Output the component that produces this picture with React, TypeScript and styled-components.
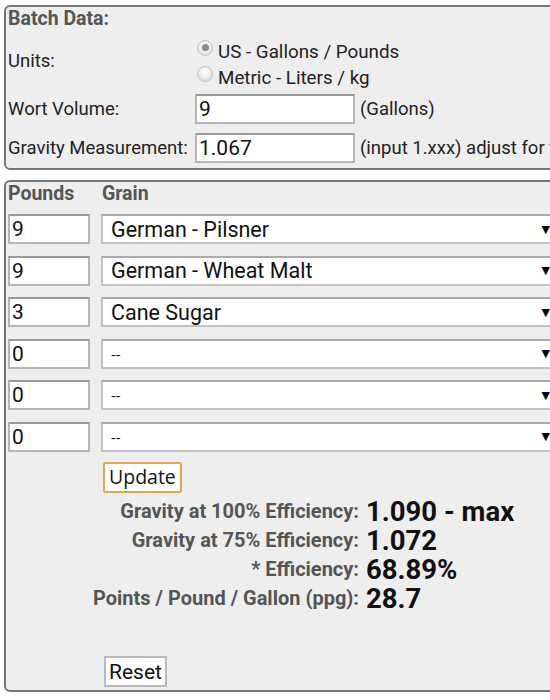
import React from "react";
import styled, { createGlobalStyle } from "styled-components";

const GlobalStyle = createGlobalStyle`
  html, body {
    margin: 0;
    padding: 0;
    overflow: hidden;
    background: #ffffff;
    font-family: Roboto, "Liberation Sans", sans-serif;
    color: #222;
  }
`;

const Page = styled.div`
  width: 640px;
  padding: 5px 0 0 4px;
  display: flex;
  flex-direction: column;
  gap: 10px;
`;

const Panel = styled.div<{ $height: number }>`
  height: ${(p) => p.$height}px;
  box-sizing: border-box;
  background: #eeeeee;
  border: 2px solid #777777;
  border-radius: 6px;
  padding: 0 0 0 2px;
  display: flex;
  flex-direction: column;
`;

const Heading = styled.div`
  font-size: 19.5px;
  font-weight: 700;
  color: #555555;
  line-height: 24px;
`;

const FormGrid = styled.div`
  display: grid;
  grid-template-columns: 187px 1fr;
  row-gap: 9px;
  align-items: center;
  margin-top: 5px;
`;

const Label = styled.div`
  font-size: 18.5px;
  color: #222;
`;

const RadioGroup = styled.div`
  display: flex;
  flex-direction: column;
  gap: 6px;
  padding: 6px 0 0 2px;
  margin-bottom: -3px;
`;

const RadioRow = styled.div`
  display: flex;
  align-items: center;
  gap: 5px;
  font-size: 18.8px;
  line-height: 20px;
`;

const Radio = styled.span<{ $checked?: boolean }>`
  width: 16px;
  height: 16px;
  border-radius: 50%;
  box-sizing: border-box;
  border: 1px solid #c4c4c4;
  background: radial-gradient(circle at 50% 35%, #ffffff, #d8d8d8);
  display: flex;
  align-items: center;
  justify-content: center;
  margin-top: -9px;

  &::after {
    content: "";
    display: ${(p) => (p.$checked ? "block" : "none")};
    width: 7px;
    height: 7px;
    border-radius: 50%;
    background: #8a8a8a;
  }
`;

const InputLine = styled.div`
  display: flex;
  align-items: center;
  gap: 5px;
  font-size: 18.5px;
  white-space: nowrap;
`;

const TextBox = styled.div<{ $width: number }>`
  width: ${(p) => p.$width}px;
  height: 30px;
  box-sizing: border-box;
  background: #ffffff;
  border: 2px solid #b5b5b5;
  border-top-color: #999999;
  padding: 0 2px;
  font-size: 21px;
  line-height: 26px;
  color: #111;
`;

const GrainHeader = styled.div`
  display: flex;
  font-size: 19.5px;
  font-weight: 700;
  color: #555555;
  line-height: 24px;
`;

const HeaderCell = styled.div<{ $width?: number }>`
  width: ${(p) => (p.$width ? `${p.$width}px` : "auto")};
`;

const GrainList = styled.div`
  display: flex;
  flex-direction: column;
  gap: 11.5px;
  margin-top: 8px;
`;

const GrainRow = styled.div`
  display: flex;
  gap: 11px;
`;

const Select = styled.div<{ $empty?: boolean }>`
  width: 455px;
  height: 30px;
  box-sizing: border-box;
  background: #ffffff;
  border: 2px solid #c4c4c4;
  border-top-color: #aaaaaa;
  padding: 0 4px 0 8px;
  display: flex;
  align-items: center;
  justify-content: space-between;
  font-family: ${(p) => (p.$empty ? '"Open Sans", sans-serif' : "Roboto, sans-serif")};
  font-size: ${(p) => (p.$empty ? "15px" : "21.5px")};
  color: #111;
`;

const Arrow = styled.span`
  font-size: 11px;
  color: #000;
  font-family: "DejaVu Sans", sans-serif;
`;

const Button = styled.button<{ $focused?: boolean }>`
  align-self: flex-start;
  margin-left: ${(p) => (p.$focused ? "95px" : "96px")};
  height: 31px;
  box-sizing: border-box;
  padding: 0 ${(p) => (p.$focused ? "4px" : "3px")};
  background: #ffffff;
  border: 2px solid ${(p) => (p.$focused ? "#e2a94c" : "#b8b8b8")};
  border-radius: ${(p) => (p.$focused ? "2px" : "0")};
  font-family: ${(p) => (p.$focused ? '"Open Sans", sans-serif' : "Roboto, sans-serif")};
  font-size: ${(p) => (p.$focused ? "19.5px" : "21px")};
  color: #111;
  line-height: 26px;
`;

const Results = styled.div`
  display: grid;
  grid-template-columns: 351px auto;
  grid-auto-rows: 29px;
  column-gap: 7px;
  align-items: center;
  margin-top: 4px;
`;

const ResultLabel = styled.div`
  text-align: right;
  font-size: 20px;
  line-height: 24px;
  font-weight: 700;
  color: #555555;
  white-space: nowrap;
`;

const ResultValue = styled.div`
  font-size: 27.5px;
  line-height: 29px;
  font-weight: 700;
  color: #111;
  white-space: nowrap;
`;

const Spacer = styled.div`
  flex: 1;
`;

const Gap = styled.div<{ $h: number }>`
  height: ${(p) => p.$h}px;
  flex: none;
`;

const grains = [
  { pounds: "9", name: "German - Pilsner" },
  { pounds: "9", name: "German - Wheat Malt" },
  { pounds: "3", name: "Cane Sugar" },
  { pounds: "0", name: "--" },
  { pounds: "0", name: "--" },
  { pounds: "0", name: "--" },
];

const results = [
  { label: "Gravity at 100% Efficiency:", value: "1.090 - max" },
  { label: "Gravity at 75% Efficiency:", value: "1.072" },
  { label: "* Efficiency:", value: "68.89%" },
  { label: "Points / Pound / Gallon (ppg):", value: "28.7" },
];

export default function App() {
  return (
    <>
      <GlobalStyle />
      <Page>
        <Panel $height={165}>
          <Heading>Batch Data:</Heading>
          <FormGrid>
            <Label>Units:</Label>
            <RadioGroup>
              <RadioRow>
                <Radio $checked />
                US - Gallons / Pounds
              </RadioRow>
              <RadioRow>
                <Radio />
                Metric - Liters / kg
              </RadioRow>
            </RadioGroup>
            <Label>Wort Volume:</Label>
            <InputLine>
              <TextBox $width={160}>9</TextBox>
              (Gallons)
            </InputLine>
            <Label>Gravity Measurement:</Label>
            <InputLine>
              <TextBox $width={160}>1.067</TextBox>
              (input 1.xxx) adjust for temperature
            </InputLine>
          </FormGrid>
        </Panel>
        <Panel $height={512}>
          <GrainHeader>
            <HeaderCell $width={94}>Pounds</HeaderCell>
            <HeaderCell>Grain</HeaderCell>
          </GrainHeader>
          <GrainList>
            {grains.map((g, i) => (
              <GrainRow key={i}>
                <TextBox $width={82}>{g.pounds}</TextBox>
                <Select $empty={g.name === "--"}>
                  <span>{g.name}</span>
                  <Arrow>▼</Arrow>
                </Select>
              </GrainRow>
            ))}
          </GrainList>
          <Gap $h={10} />
          <Button $focused>Update</Button>
          <Results>
            {results.map((r) => (
              <React.Fragment key={r.label}>
                <ResultLabel>{r.label}</ResultLabel>
                <ResultValue>{r.value}</ResultValue>
              </React.Fragment>
            ))}
          </Results>
          <Spacer />
          <Button>Reset</Button>
          <Gap $h={3} />
        </Panel>
      </Page>
    </>
  );
}
